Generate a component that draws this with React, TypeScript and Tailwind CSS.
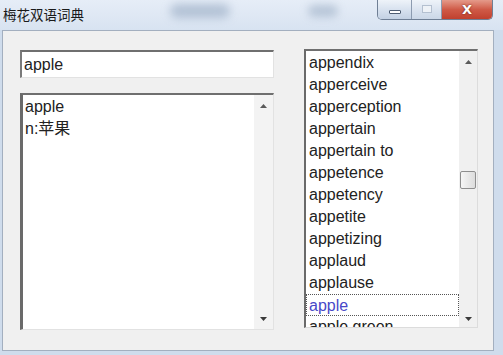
import React from 'react';

const words = [
  'appendix',
  'apperceive',
  'apperception',
  'appertain',
  'appertain to',
  'appetence',
  'appetency',
  'appetite',
  'appetizing',
  'applaud',
  'applause',
  'apple',
  'apple green',
];

function ArrowUp() {
  return (
    <svg width="7" height="4" viewBox="0 0 7 4">
      <path d="M0 4 L3.5 0 L7 4 Z" fill="#5a5a5a" />
    </svg>
  );
}

function ArrowDown() {
  return (
    <svg width="7" height="4" viewBox="0 0 7 4">
      <path d="M0 0 L7 0 L3.5 4 Z" fill="#3a3a3a" />
    </svg>
  );
}

export default function App() {
  return (
    <div className="w-[503px] h-[355px] flex flex-col bg-[#cfdcec] font-['Liberation_Sans',sans-serif] overflow-hidden">
      {/* title bar */}
      <div className="relative h-[30px] shrink-0 bg-gradient-to-b from-[#e6edf7] to-[#d8e3f1]">
        <div className="absolute left-[170px] top-[4px] w-[60px] h-[14px] rounded-full bg-[#9fb1c8] blur-[5px] opacity-70" />
        <div className="absolute left-[308px] top-[5px] w-[30px] h-[12px] rounded-full bg-[#a5b6cb] blur-[4px] opacity-70" />
        <div className="absolute left-[3px] top-[4px] text-[13.5px] leading-[20px] text-[#1a1a1a] font-['Noto_Sans_CJK_SC',sans-serif]">
          梅花双语词典
        </div>
        <div className="absolute left-[377px] top-0 flex h-[20px] rounded-b-[5px] border border-t-0 border-[#6f7f95] overflow-hidden">
          <div className="w-[34px] flex items-center justify-center bg-gradient-to-b from-[#eef3f9] via-[#d8e2ef] to-[#c3d1e3] border-r border-[#8c9bb0]">
            <div className="w-[12px] h-[4px] mt-[4px] bg-white border border-[#4e5d72] rounded-[1px]" />
          </div>
          <div className="w-[30px] flex items-center justify-center bg-gradient-to-b from-[#eef3f9] via-[#dbe4f0] to-[#cbd7e7] border-r border-[#8c9bb0]">
            <div className="w-[10px] h-[8px] mb-[2px] border border-[#b4c0d0] bg-[#eef2f7]" />
          </div>
          <div className="w-[50px] flex items-center justify-center bg-gradient-to-b from-[#e49a8a] via-[#cf5a47] to-[#c0402e]">
            <span className="text-white font-bold text-[13px] leading-none font-['DejaVu_Sans',sans-serif] [text-shadow:0_0_2px_#5a1a10]">X</span>
          </div>
        </div>
      </div>

      {/* frame + client */}
      <div className="flex flex-1 pl-[2px] pr-[9px]">
        <div className="flex-1 bg-[#f0f0f0] border border-[#a3afbf] flex pt-[19px] pl-[17px] pb-[20px]">
          {/* left column */}
          <div className="w-[254px] flex flex-col">
            <div className="h-[28px] bg-white border-t-2 border-l-2 border-r border-b border-t-[#6f6f6f] border-l-[#7a7a7a] border-r-[#e2e2e2] border-b-[#e2e2e2] pl-[2px] flex items-center">
              <span className="text-[16px] text-[#222]">apple</span>
            </div>
            <div className="mt-[15px] h-[237px] bg-white border-t-2 border-l-[3px] border-r border-b border-t-[#6f6f6f] border-l-[#6a6a6a] border-r-[#e2e2e2] border-b-[#e2e2e2] flex">
              <div className="flex-1 pl-[2px] pt-[1px] text-[16px] leading-[22px] text-[#222]">
                <div>apple</div>
                <div className="font-['Liberation_Sans','Noto_Sans_CJK_SC',sans-serif]">n:苹果</div>
              </div>
              <div className="w-[19px] bg-[#f3f3f3] flex flex-col items-center justify-between pt-[9px] pb-[8px]">
                <ArrowUp />
                <ArrowDown />
              </div>
            </div>
          </div>

          {/* word list */}
          <div className="ml-[30px] w-[174px] h-[279px] -mt-[1px] bg-white border-t-2 border-l-2 border-r border-b border-t-[#6f6f6f] border-l-[#6a6a6a] border-r-[#dcdcdc] border-b-[#dcdcdc] flex overflow-hidden">
            <div className="flex-1 pt-[1px] overflow-hidden">
              {words.map((w) => (
                <div
                  key={w}
                  className={
                    w === 'apple'
                      ? 'h-[22px] leading-[21px] pl-[2px] text-[16px] text-[#4848c8] border border-dotted border-[#555]'
                      : 'h-[22px] leading-[22px] pl-[3px] text-[16px] text-[#222] whitespace-nowrap'
                  }
                >
                  {w}
                </div>
              ))}
            </div>
            <div className="w-[18px] bg-[#f0f0f0] flex flex-col items-center pt-[9px] pb-[6px]">
              <ArrowUp />
              <div className="mt-[107px] w-[16px] h-[18px] border border-[#8e8e8e] rounded-[2px] bg-gradient-to-r from-[#f6f6f6] to-[#dcdcdc]" />
              <div className="flex-1" />
              <ArrowDown />
            </div>
          </div>
        </div>
      </div>
      <div className="h-[4px] shrink-0" />
    </div>
  );
}
